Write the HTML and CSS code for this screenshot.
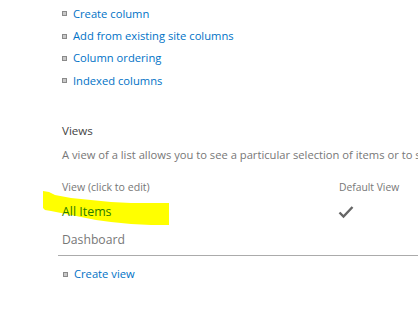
FILE: index.html
```html
<!DOCTYPE html>
<html>
<head>
<meta charset="utf-8">
<link rel="stylesheet" href="styles.css">
</head>
<body>
<div class="page">
  <ul class="links top-links">
    <li><a href="#">Create column</a></li>
    <li><a href="#">Add from existing site columns</a></li>
    <li><a href="#">Column ordering</a></li>
    <li><a href="#">Indexed columns</a></li>
  </ul>

  <section class="views">
    <h2 class="views-title">Views</h2>
    <p class="views-desc">A view of a list allows you to see a particular selection of items or to see the items sorted in a particular order.</p>

    <div class="views-table">
      <div class="row head">
        <span class="col-name">View (click to edit)</span>
        <span class="col-default">Default View</span>
      </div>
      <div class="row item">
        <span class="col-name highlight-wrap">
          <svg class="highlight" width="140" height="40" viewBox="0 0 140 40"><path d="M2 2 L8 3 L14 6 L30 9 L50 11 L70 13 L90 14 L110 14 L128 14 L128 36 L110 36 L90 35 L70 33 L55 31 L40 28 L25 25 L10 22 L4 21 L2 19 Z" fill="#ffff00"/></svg>
          <a href="#" class="item-link">All Items</a>
        </span>
        <span class="col-default">
          <svg class="check" width="16" height="14" viewBox="0 0 16 14"><path d="M1.5 7.5 L5.5 11.5 L14.5 2" fill="none" stroke="#666" stroke-width="2.4"/></svg>
        </span>
      </div>
      <div class="row item">
        <span class="col-name"><a href="#" class="item-link plain">Dashboard</a></span>
        <span class="col-default"></span>
      </div>
    </div>

    <ul class="links bottom-links">
      <li><a href="#">Create view</a></li>
    </ul>
  </section>
</div>
</body>
</html>
```

FILE: styles.css
```css
html, body {
  margin: 0;
  padding: 0;
  background: #fff;
  overflow: hidden;
}
body {
  font-family: "Open Sans", "Noto Sans", sans-serif;
  width: 418px;
  height: 316px;
}
.page {
  padding-left: 62px;
  width: 600px;
}
a {
  text-decoration: none;
  color: #0072c6;
}
.links {
  list-style: none;
  margin: 0;
  padding: 0;
}
.links li {
  display: flex;
  align-items: center;
  height: 22.4px;
  font-size: 11.2px;
}
.links li::before {
  content: "";
  width: 3px;
  height: 3px;
  border: 1px solid #8a8a8a;
  background: #c8c8c8;
  margin: 1px 6px 0 0;
  flex: none;
}
.top-links {
  padding-top: 2px;
}
.views {
  margin-top: 31px;
}
.views-title {
  margin: 0;
  font-size: 11.6px;
  font-weight: 400;
  color: #444;
  line-height: 16px;
}
.views-desc {
  margin: 8px 0 0;
  font-size: 11.2px;
  color: #777;
  white-space: nowrap;
  line-height: 16px;
}
.views-table {
  margin-top: 16px;
  margin-left: -4px;
  width: 420px;
  border-bottom: 1px solid #ababab;
  padding-bottom: 1px;
}
.row {
  display: flex;
  align-items: center;
  padding-left: 4px;
}
.row.head {
  font-size: 10.6px;
  color: #777;
  height: 16px;
  margin-bottom: 3px;
}
.row.head .col-default {
  font-size: 10.3px;
}
.row.item {
  height: 28px;
  font-size: 12.4px;
}
.col-name {
  width: 277px;
  flex: none;
}
.col-default {
  display: flex;
  align-items: center;
}
.highlight-wrap {
  position: relative;
}
.highlight {
  position: absolute;
  left: -21px;
  top: -14px;
}
.item-link {
  position: relative;
  color: #2a7a00;
}
.item-link.plain {
  color: #777;
  font-size: 12.2px;
}
.check {
  display: block;
  margin-left: -1px;
}
.bottom-links {
  margin-top: 7px;
}
.bottom-links li {
  padding-left: 1px;
}
```
